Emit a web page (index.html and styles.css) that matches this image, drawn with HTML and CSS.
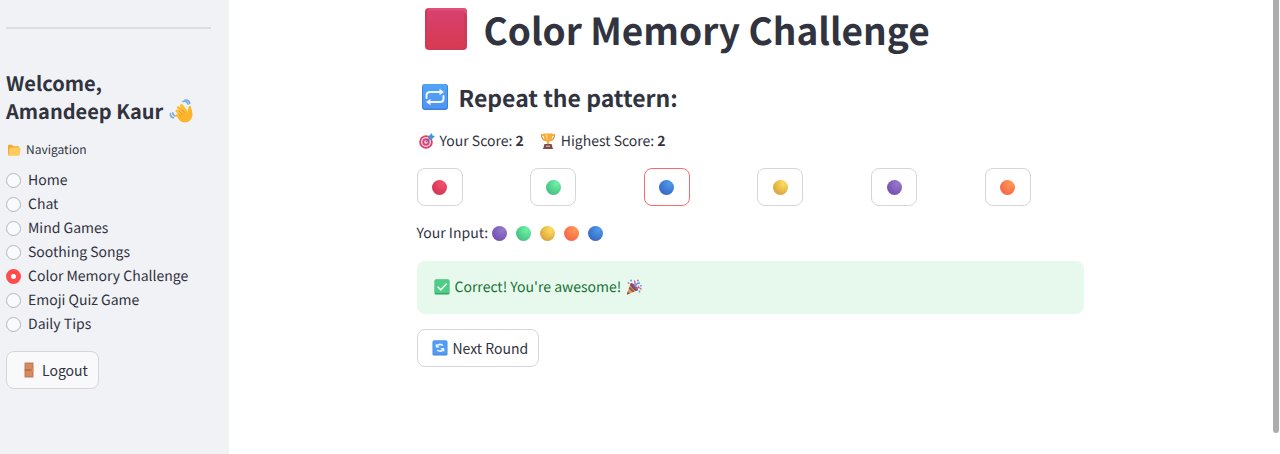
FILE: index.html
```html
<!DOCTYPE html>
<html lang="en">
<head>
<meta charset="utf-8">
<meta name="viewport" content="width=device-width, initial-scale=1">
<title>Color Memory Challenge</title>
<link rel="stylesheet" href="styles.css">
</head>
<body>
<div class="app">
  <aside class="sidebar">
    <hr class="divider">
    <h2 class="welcome">Welcome,<br>Amandeep Kaur
      <svg class="wave" viewBox="0 0 24 24" aria-hidden="true">
        <g fill="none" stroke="#82afdf" stroke-width="1.7" stroke-linecap="round"><path d="M14 2.500c2-1 4 0 5 2.500M16 1.200c2.500-.4 4.300 1 4.700 3.200M1.500 14.500c-.3 2 .8 3.800 3 4.300M3.800 13.800c0 1.500.8 2.700 2.300 3.200"/></g>
        <g stroke="#ffbd35" stroke-width="3" stroke-linecap="round"><path d="m8 16.500 5 3M8 12l6 6M9.300 8.500l7 7.500M12.500 6.500l6 8"/></g>
        <path d="M19.500 8.500c0-2 2.600-1.800 2.700.3 0 2 1.300 3.500 1.300 6.200 0 5-3.300 8.500-7.800 8.500-2.700 0-4.700-1.500-6.700-4L14 12l4.500 1.500z" fill="#fbb52d"/>
        <path d="m9.500 11.500 4 4M11.300 8.500l4.200 5M9 14.800l3 2.700" stroke="#e08a20" stroke-width=".8"/>
      </svg>
    </h2>
    <fieldset class="nav">
      <legend class="nav-title">
        <svg class="folder" viewBox="0 0 14 14" aria-hidden="true"><path d="M1 3q0-1.300 1.300-1.300h2.500l1.500 1.500H11q1.200 0 1.200 1.200V12H1z" fill="#f0a92e"/><path d="M2.500 5.500q.2-1 1.200-1h8.800q1.300 0 1.100 1.200l-.9 5.900q-.2 1.200-1.400 1.200H1.200z" fill="#ffcb5c"/></svg>Navigation
      </legend>
      <label class="option"><input type="radio" name="page">Home</label>
      <label class="option"><input type="radio" name="page">Chat</label>
      <label class="option"><input type="radio" name="page">Mind Games</label>
      <label class="option"><input type="radio" name="page">Soothing Songs</label>
      <label class="option"><input type="radio" name="page" checked>Color Memory Challenge</label>
      <label class="option"><input type="radio" name="page">Emoji Quiz Game</label>
      <label class="option"><input type="radio" name="page">Daily Tips</label>
    </fieldset>
    <button class="btn" type="button">
      <svg class="icon" viewBox="0 0 16 16" aria-hidden="true"><path d="M3.500.5h9v15h-9z" fill="#c97c56"/><path d="M5 2h6v5H5zM5 9h6v5H5z" fill="#d58a60"/><path d="M3.500 8h9" stroke="#a96344" stroke-width=".8"/><circle cx="11.300" cy="8" r=".8" fill="#f0b35c"/></svg>Logout
    </button>
  </aside>

  <main class="main">
    <div class="content">
      <h1 class="title">
        <svg class="square" viewBox="0 0 42 42" aria-hidden="true">
          <defs><linearGradient id="red-face" x1="0" y1="0" x2="0" y2="1"><stop offset="0" stop-color="#d8406f"/><stop offset="1" stop-color="#d83a52"/></linearGradient></defs>
          <rect width="42" height="42" rx="4" fill="#cf3a5a"/><path d="M4 0h34q4 0 4 4v3L38 3H2z" fill="#df5076"/><rect x="2" y="2.500" width="37" height="37" rx="2" fill="url(#red-face)"/>
        </svg>Color Memory Challenge
      </h1>
      <h2 class="subtitle">
        <svg class="repeat" viewBox="0 0 26 26" aria-hidden="true">
          <defs><linearGradient id="blue-face" x1="0" y1="0" x2="0" y2="1"><stop offset="0" stop-color="#4fa5f5"/><stop offset="1" stop-color="#5294f3"/></linearGradient></defs>
          <rect width="26" height="26" rx="3" fill="#3b83d6"/><rect x="1" y="0" width="24" height="24.500" rx="2.500" fill="url(#blue-face)"/>
          <g fill="none" stroke="#eef5ff" stroke-width="2" stroke-linecap="round"><path d="M4.500 14v-2.500q0-3.500 3.500-3.500h10M21.500 12v2.500q0 3.500-3.500 3.500H8"/></g>
          <path d="m17.500 4.800 4.500 3.200-4.500 3.200zM8.500 14.800 4 18l4.500 3.200z" fill="#eef5ff"/>
        </svg>Repeat the pattern:
      </h2>
      <div class="scores">
        <p class="line">
          <svg class="icon" viewBox="0 0 16 16" aria-hidden="true"><circle cx="7" cy="9" r="6.800" fill="#d94373"/><circle cx="7" cy="9" r="5" fill="#f5d8e5"/><circle cx="7" cy="9" r="3.700" fill="#d94373"/><circle cx="7" cy="9" r="1.800" fill="#f5d8e5"/><path d="M7 9 13 3" stroke="#5273a5" stroke-width="1.300"/><path d="m10 5.500.3-3L13 0l.4 2.500L16 3l-2.500 2.700z" fill="#2f9ee8"/></svg>
          <span>Your Score: <b>2</b></span>
        </p>
        <p class="line">
          <svg class="icon" viewBox="0 0 16 16" aria-hidden="true"><path d="M4 2H1.500q0 4 4 5.500M12 2h2.500q0 4-4 5.500" fill="none" stroke="#e89a32" stroke-width="1.400"/><path d="M3.500.5h9q0 7-3.500 8.500v3H7V9Q3.500 7 3.500.5z" fill="#f5ae3c"/><path d="M5.500 1.500h2q0 4 .3 6-2-1.500-2.300-6z" fill="#ffd16a"/><path d="M4.500 11h7l1.500 5H3z" fill="#754b5c"/><path d="M6 12.500h4v1.500H6z" fill="#e8a140"/></svg>
          <span>Highest Score: <b>2</b></span>
        </p>
      </div>
      <div class="pads">
        <div><button class="btn pad" type="button" aria-label="Red"><span class="ball red"></span></button></div>
        <div><button class="btn pad" type="button" aria-label="Green"><span class="ball green"></span></button></div>
        <div><button class="btn pad active" type="button" aria-label="Blue"><span class="ball blue"></span></button></div>
        <div><button class="btn pad" type="button" aria-label="Yellow"><span class="ball yellow"></span></button></div>
        <div><button class="btn pad" type="button" aria-label="Purple"><span class="ball purple"></span></button></div>
        <div><button class="btn pad" type="button" aria-label="Orange"><span class="ball orange"></span></button></div>
      </div>
      <div class="entered">
        <span>Your Input:</span>
        <span class="sequence"><span class="ball purple"></span><span class="ball green"></span><span class="ball yellow"></span><span class="ball orange"></span><span class="ball blue"></span></span>
      </div>
      <div class="alert" role="status">
        <svg class="icon" viewBox="0 0 16 16" aria-hidden="true"><rect x=".5" y=".5" width="15" height="15" rx="1.500" fill="#31a868"/><rect x="1" y=".5" width="14" height="13.500" rx="1" fill="#4fcc86"/><path d="m4 8 2.800 2.800L12.300 5" fill="none" stroke="#effff5" stroke-width="1.600" stroke-linecap="round"/></svg>
        <span>Correct! You're awesome!</span>
        <svg class="icon" viewBox="0 0 16 16" aria-hidden="true"><path d="m4.500 4.500 7 7L.8 15.700z" fill="#f0a43d"/><path d="m3.600 7.400 5 5-2.200.9L2.700 9.800zM1.800 12l2.300 2.400-3.300 1.300z" fill="#8e5872"/><ellipse cx="8" cy="8" rx="2" ry="5" transform="rotate(-45 8 8)" fill="#7c4c68"/><g fill="none" stroke-width="1.300" stroke-linecap="round"><path d="M8 7q2-2 .5-5" stroke="#d65bb4"/><path d="M9.500 8Q10 4 13.500 4" stroke="#4b9ced"/><path d="M10 9.500q3-2 5 .5" stroke="#df4e82"/></g><g fill="#5a8de8"><circle cx="5" cy="1.500" r=".9"/><circle cx="15" cy="6.800" r=".9"/><circle cx="13.500" cy="12.500" r=".9"/></g><g fill="#dd65b2"><circle cx="12" cy="1.500" r="1"/><circle cx="2.500" cy="4" r=".9"/><circle cx="12.500" cy="7.300" r=".8"/></g></svg>
      </div>
      <button class="btn" type="button">
        <svg class="icon" viewBox="0 0 16 16" aria-hidden="true"><rect x=".5" y=".5" width="15" height="15" rx="1.500" fill="#3f83dc"/><rect x="1" y=".5" width="14" height="14" rx="1" fill="#539af2"/><g fill="none" stroke="#edf5ff" stroke-width="1.500"><path d="M4.500 6.500Q7 2.800 11 5.500M11.500 9Q9 12.700 5 10"/></g><path d="M3.700 3.500v4h4zM12.300 12V8h-4z" fill="#edf5ff"/></svg>Next Round
      </button>
    </div>
  </main>
  <div class="scrollbar" aria-hidden="true"></div>
</div>
</body>
</html>
```
FILE: styles.css
```css
* { box-sizing: border-box; }

body {
  margin: 0;
  background: #fff;
  color: #31333f;
  font: 14px/22px "Noto Sans CJK SC", "Open Sans", sans-serif;
  text-rendering: geometricPrecision;
}

h1, h2, p { margin: 0; }
svg { display: block; flex: none; }

.app { display: flex; min-height: 100vh; }

.sidebar {
  flex: 0 0 229px;
  padding: 27px 18px 24px 6px;
  background: #f0f2f6;
}

.divider {
  height: 2px;
  margin: 0 0 40px;
  border: 0;
  background: #dcdde2;
}

.welcome {
  font-size: 20px;
  line-height: 28px;
  font-weight: 700;
}

.wave {
  display: inline-block;
  width: 24px;
  height: 24px;
  margin-left: 1px;
  vertical-align: -4px;
}

.nav { margin: 0; padding: 0; border: 0; }

.nav-title {
  display: flex;
  align-items: center;
  gap: 5px;
  padding: 14px 0 7px 1px;
  font-size: 12px;
}

.folder { width: 14px; height: 14px; }

.option {
  display: flex;
  align-items: center;
  gap: 7px;
  height: 24px;
}

.option input {
  appearance: none;
  width: 15px;
  height: 15px;
  margin: 0;
  border: 1px solid #b3b5bd;
  border-radius: 50%;
  background: #f9fafc;
}

.option input:checked {
  border: 5px solid #ff4b4b;
  background: #fff;
}

.btn {
  display: inline-flex;
  align-items: center;
  justify-content: center;
  gap: 5px;
  height: 38px;
  padding: 0 10px 0 14px;
  border: 1px solid #d6d6da;
  border-radius: 8px;
  background: #fff;
  color: inherit;
  font: inherit;
}

.sidebar .btn { margin-top: 15px; background: #f9f9fb; }

.icon { width: 16px; height: 16px; }

.main { flex: 1; padding: 5px 26px 24px 24px; }

.content {
  display: flex;
  flex-direction: column;
  align-items: flex-start;
  max-width: 667px;
  margin: 0 auto;
}

.title {
  display: flex;
  align-items: center;
  gap: 17px;
  padding-left: 8px;
  font-size: 37px;
  line-height: 48px;
  font-weight: 700;
}

.square { width: 42px; height: 42px; }

.subtitle {
  display: flex;
  align-items: center;
  gap: 11px;
  margin-top: 28px;
  padding-left: 5px;
  font-size: 23px;
  line-height: 32px;
  font-weight: 700;
}

.repeat { width: 26px; height: 26px; }

.scores { display: flex; gap: 16px; margin-top: 17px; padding-left: 2px; }
.line { display: flex; align-items: center; gap: 5px; }

.pads {
  display: grid;
  grid-template-columns: repeat(6, 1fr);
  gap: 15px;
  width: 100%;
  margin-top: 16px;
}

.pads > div { display: flex; }
.pad { width: 46px; padding: 0; }
.active { border-color: #f56b6b; }

.ball { width: 15px; height: 15px; border-radius: 50%; }
.red { background: radial-gradient(circle at 70% 25%, #f4526b, #c72e4d); }
.green { background: radial-gradient(circle at 70% 25%, #6af5a4, #42ad79); }
.blue { background: radial-gradient(circle at 70% 25%, #4f9ae8, #3159bd); }
.yellow { background: radial-gradient(circle at 70% 25%, #ffdf59, #ce9139); }
.purple { background: radial-gradient(circle at 70% 25%, #967acb, #6b42ab); }
.orange { background: radial-gradient(circle at 70% 25%, #ff9854, #f35846); }

.entered { display: flex; align-items: center; gap: 4px; margin-top: 16px; }
.sequence { display: flex; gap: 9px; }

.alert {
  display: flex;
  align-items: center;
  gap: 5px;
  width: 100%;
  margin: 17px 0 15px;
  padding: 15px 17px 16px;
  border-radius: 8px;
  background: #e7f9ed;
  color: #177233;
}

.scrollbar {
  width: 6px;
  height: 433px;
  margin-right: 1px;
  border-radius: 0 0 3px 3px;
  background: #adadaf;
}
```
